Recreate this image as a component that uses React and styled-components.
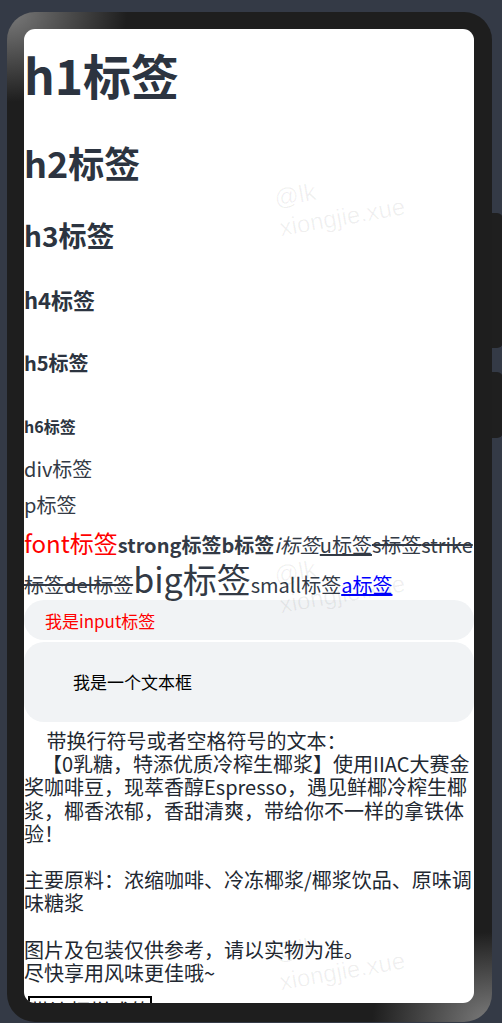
import styled, { createGlobalStyle } from 'styled-components'

const GlobalStyle = createGlobalStyle`
body {
  margin: 0;
  background: #343a46;
}
`

const Page = styled.div`
padding: 12px 0 0 7px;
`

const Phone = styled.div`
position: relative;
width: 485px;
height: 1010px;
box-sizing: border-box;
padding: 17px 18px 19px 17px;
border-radius: 28px;
background:
  radial-gradient(ellipse 120px 90px at 0 0, #7c7c7c, rgba(30, 30, 30, 0)),
  radial-gradient(ellipse 120px 90px at 100% 100%, #7c7c7c, rgba(30, 30, 30, 0)),
  #1e1e1e;
`

const SideKey = styled.div`
position: absolute;
right: -11px;
top: ${p => p.$top}px;
width: 11px;
height: ${p => p.$h}px;
border-radius: 0 6px 6px 0;
background: #1f1f1f;
`

const Screen = styled.div`
position: relative;
height: 100%;
overflow: hidden;
border-radius: 11px;
background: #fff;
color: #2c3440;
font-family: "Noto Sans CJK SC", "Noto Sans", sans-serif;
`

const Heading = styled.h1`
margin: ${p => p.$mt}px 0 0;
font-size: ${p => p.$size}px;
line-height: ${p => p.$lh}px;
font-weight: 700;
`

const Block = styled.div`
margin: ${p => p.$mt}px 0 0;
font-size: 20px;
line-height: 28px;
color: #333a45;
`

const InlineRow = styled.p`
margin: 6px 0 0;
font-size: 20px;
line-height: 40px;
color: #333a45;
`

const Font = styled.span`
font-size: 24px;
line-height: 20px;
color: #f00;
`

const Big = styled.span`
font-size: 34px;
line-height: 20px;
`

const Small = styled.small`
font-size: 20px;
`

const Strike = styled.span`
text-decoration: line-through;
`

const Link = styled.a`
color: #00f;
`

const Field = styled.input`
display: block;
width: 100%;
height: 40px;
box-sizing: border-box;
margin: -5px 0 0;
padding: 0 21px;
border: none;
outline: none;
border-radius: 20px;
background: #f1f3f5;
color: #f00;
font-family: inherit;
font-size: 17px;
`

const Area = styled.textarea`
display: block;
width: 100%;
height: 80px;
box-sizing: border-box;
margin: 2px 0 0;
padding: 29px 49px 0;
border: none;
outline: none;
resize: none;
border-radius: 20px;
background: #f1f3f5;
color: #000;
font-family: inherit;
font-size: 17px;
line-height: 22px;
overflow: hidden;
`

const Pre = styled.div`
margin-top: 7px;
white-space: pre;
font-size: 20px;
line-height: 23.2px;
color: #222831;
`

const Boxed = styled.div`
display: inline-block;
margin: 12px 0 0 4px;
border: 2px solid #000;
font-size: 20px;
line-height: 26px;
color: #222;
`

const Watermark = styled.div`
position: absolute;
left: ${p => p.$x}px;
top: ${p => p.$y}px;
transform: rotate(-10deg);
transform-origin: 0 0;
pointer-events: none;
font-family: "Liberation Sans", Arial, sans-serif;
font-size: 24px;
line-height: 30px;
color: rgba(0, 0, 0, 0.06);
`

const text = `     带换行符号或者空格符号的文本：
    【0乳糖，特添优质冷榨生椰浆】使用IIAC大赛金
奖咖啡豆，现萃香醇Espresso，遇见鲜椰冷榨生椰
浆，椰香浓郁，香甜清爽，带给你不一样的拿铁体
验！

主要原料：浓缩咖啡、冷冻椰浆/椰浆饮品、原味调
味糖浆

图片及包装仅供参考，请以实物为准。
尽快享用风味更佳哦~`

const marks = [155, 532, 909]

const App = () => {
    return (
        <>
            <GlobalStyle />
            <Page>
                <Phone>
                    <SideKey $top={201} $h={135} />
                    <SideKey $top={360} $h={66} />
                    <Screen>
                        <Heading $size={48} $lh={56} $mt={17}>h1标签</Heading>
                        <Heading as="h2" $size={36} $lh={44} $mt={38}>h2标签</Heading>
                        <Heading as="h3" $size={28} $lh={34} $mt={34}>h3标签</Heading>
                        <Heading as="h4" $size={22} $lh={28} $mt={33}>h4标签</Heading>
                        <Heading as="h5" $size={20} $lh={26} $mt={37}>h5标签</Heading>
                        <Heading as="h6" $size={16} $lh={22} $mt={39}>h6标签</Heading>
                        <Block $mt={18}>div标签</Block>
                        <Block as="p" $mt={8}>p标签</Block>
                        <InlineRow>
                            <Font>font标签</Font>
                            <strong>strong标签</strong>
                            <b>b标签</b>
                            <i>i标签</i>
                            <u>u标签</u>
                            <s>s标签</s>
                            <Strike>strike标签</Strike>
                            <del>del标签</del>
                            <Big>big标签</Big>
                            <Small>small标签</Small>
                            <Link href="#">a标签</Link>
                        </InlineRow>
                        <Field readOnly value="我是input标签" />
                        <Area readOnly value="我是一个文本框" />
                        <Pre>{text}</Pre>
                        <Boxed>带边框样式的<br />文本</Boxed>
                        {marks.map(y => (
                            <Watermark key={y} $x={248} $y={y}>
                                @lk<br />xiongjie.xue
                            </Watermark>
                        ))}
                    </Screen>
                </Phone>
            </Page>
        </>
    )
}

export default App
